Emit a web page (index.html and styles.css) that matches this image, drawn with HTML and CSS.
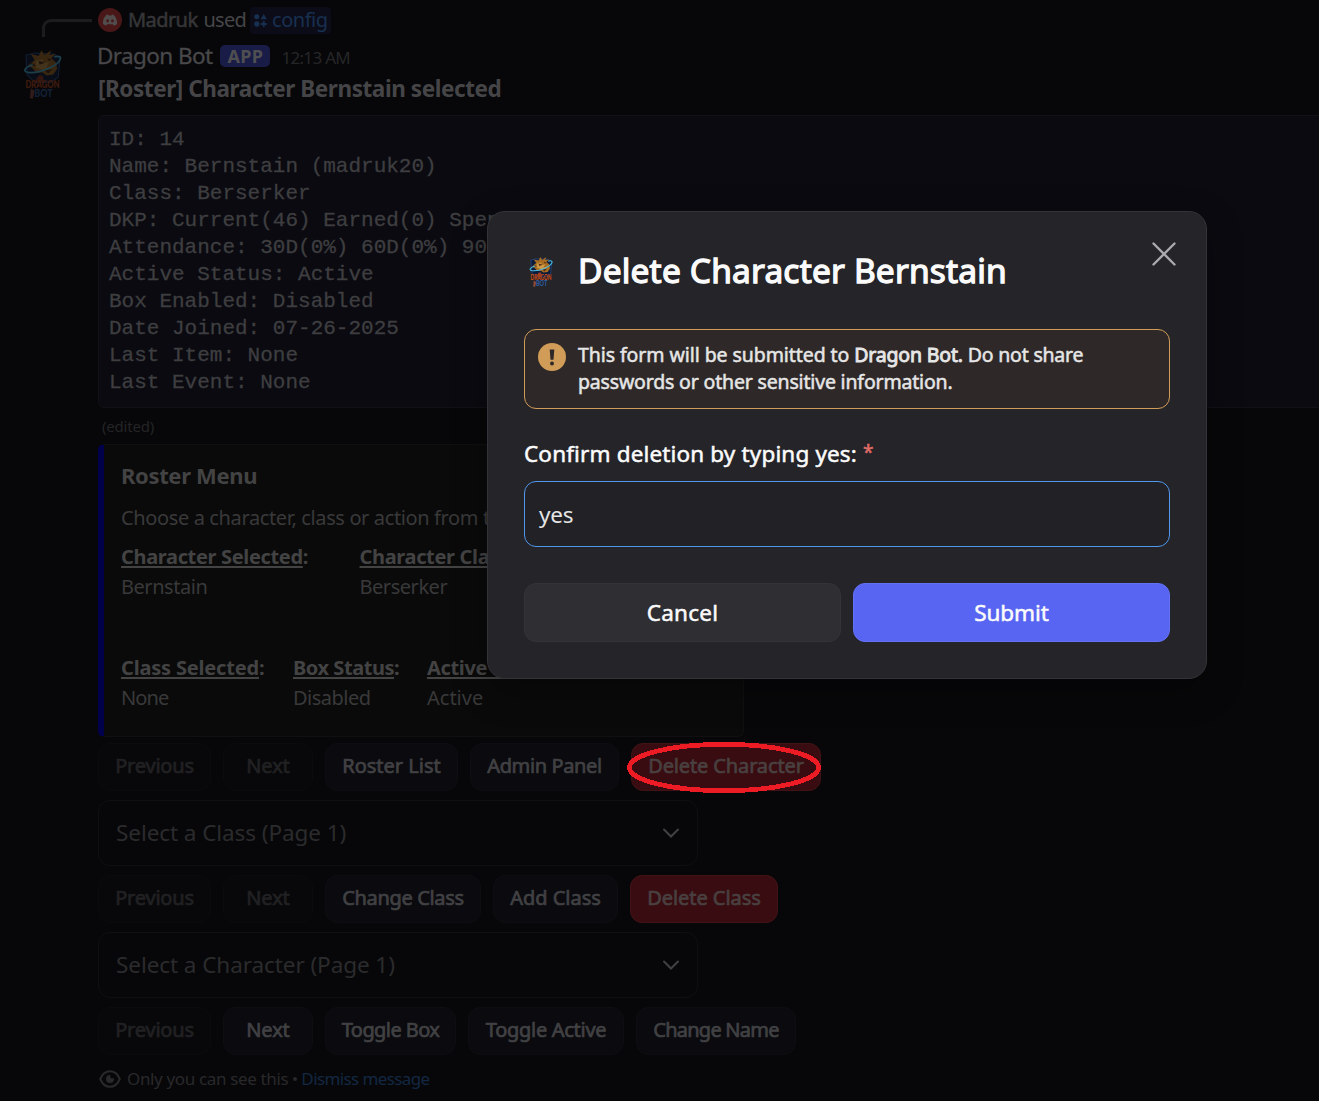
FILE: index.html
```html
<!DOCTYPE html>
<html lang="en">
<head>
<meta charset="utf-8">
<title>Dragon Bot</title>
<link rel="stylesheet" href="styles.css">
</head>
<body>
<svg class="defs" width="0" height="0">
  <symbol id="dragon" viewBox="0 0 40 52">
    <path d="M3 6 L12 4 L32 5 L38 9 L36 29 L28 34 L12 34 L4 26Z" fill="#0e1c3c" stroke="#254c86" stroke-width="1.2"/>
    <path d="M12 11 L8 5 L16 7 L19 1 L22 6 L29 1 L27 6 L34 5 L29 9 L34 14 L35 20 L31 26 L24 27 L20 24 L14 24 L9 19 L5 17Z" fill="#a86d22"/>
    <path d="M13 12 L21 10 L19 15 L27 13 L24 19 L31 17 L27 23 L20 21 L13 19Z" fill="#cf9845"/>
    <path d="M16 12 L22 14 L17 16Z M25 9 L30 11 L26 12Z M8 14 L14 17 L9 17Z M22 22 L30 20 L26 25Z" fill="#4d2c14"/>
    <path d="M10 16 C1 19 -1 23 6 24 C18 25 35 17 38 11 C40 7 36 7 32 8" fill="none" stroke="#49bde0" stroke-width="1.7"/>
    <path d="M16 27 L12 34 L22 34 L20 27Z" fill="#983b20"/>
    <text x="20" y="39.500" text-anchor="middle" class="logo-top" textLength="35" lengthAdjust="spacingAndGlyphs">DRAGON</text>
    <text x="21" y="49" text-anchor="middle" class="logo-bottom" textLength="19" lengthAdjust="spacingAndGlyphs">BOT</text>
    <path d="M8 40 L12 43 L10 51 L7 50Z" fill="#8d4a38"/>
  </symbol>
  <symbol id="chevron" viewBox="0 0 20 12"><path d="M3 2.5 L10 9.5 L17 2.5" fill="none" stroke="currentColor" stroke-width="2" stroke-linecap="round"/></symbol>
</svg>
<main class="chat">
  <aside class="gutter">
    <span class="spine"></span>
    <svg class="avatar"><use href="#dragon"/></svg>
  </aside>
  <article class="message">
    <div class="reply">
      <svg class="user-icon" viewBox="0 0 24 24"><circle cx="12" cy="12" r="12" fill="#491718"/><path d="M8.5 6.8 L10 6.5 L10.6 7.4 H13.4 L14 6.5 L15.8 6.9 C18 9 19.3 12.5 19 16 C17.8 17.1 16.6 17.5 15.6 17.6 L14.8 16.2 H9.2 L8.4 17.6 C7.1 17.4 5.9 16.9 5 16 C4.7 12.5 6 9 8.5 6.8Z" fill="#524d4d"/><ellipse cx="9.6" cy="12.8" rx="1.4" ry="1.6" fill="#491718"/><ellipse cx="14.4" cy="12.8" rx="1.4" ry="1.6" fill="#491718"/></svg>
      <span class="reply-user t-user">Madruk</span>
      <span class="t-used">used</span>
      <span class="command"><svg viewBox="0 0 14 14" width="13" height="13"><circle cx="3" cy="3" r="2.7"/><path d="M10.5 0 L13.9 5.6 H7.1Z"/><circle cx="3" cy="10.8" r="2.9"/><path d="M9.5 7.500h2v2.300h2.300v2h-2.300v2.200H9.500v-2.200H7.200V9.800h2.300z"/></svg><span class="t-config">config</span></span>
    </div>
    <div class="author"><span class="name t-bot">Dragon Bot</span><span class="badge">APP</span><time class="t-time">12:13 AM</time></div>
    <h2 class="headline">[Roster] Character Bernstain selected</h2>
    <pre class="code">ID: 14
Name: Bernstain (madruk20)
Class: Berserker
DKP: Current(46) Earned(0) Spent
Attendance: 30D(0%) 60D(0%) 90D
Active Status: Active
Box Enabled: Disabled
Date Joined: 07-26-2025
Last Item: None
Last Event: None</pre>
    <div class="edited">(edited)</div>
    <section class="embed">
      <h3>Roster Menu</h3>
      <p>Choose a character, class or action from the</p>
      <div class="fields fields-a">
        <div><b class="t-cs"><u>Character Selected</u>:</b><span class="t-bern">Bernstain</span></div>
        <div><b class="t-cs"><u>Character Class</u>:</b><span class="t-bern">Berserker</span></div>
      </div>
      <div class="fields fields-b">
        <div><b class="t-cls"><u>Class Selected</u>:</b><span class="t-none">None</span></div>
        <div><b class="t-box"><u>Box Status</u>:</b><span class="t-dis">Disabled</span></div>
        <div><b class="t-cs"><u>Active Status</u>:</b><span>Active</span></div>
      </div>
    </section>
    <div class="actions">
      <button class="btn w-prev off">Previous</button>
      <button class="btn w-next off">Next</button>
      <button class="btn w-list">Roster List</button>
      <button class="btn w-admin">Admin Panel</button>
      <button class="btn w-delchar danger">Delete Character</button>
      <svg class="ring" width="194" height="51" viewBox="0 0 194 51"><ellipse cx="97" cy="25.500" rx="94.600" ry="23.200"/></svg>
    </div>
    <div class="select">Select a Class (Page 1)<svg><use href="#chevron"/></svg></div>
    <div class="actions">
      <button class="btn w-prev off">Previous</button>
      <button class="btn w-next off">Next</button>
      <button class="btn w-chclass">Change Class</button>
      <button class="btn w-addclass">Add Class</button>
      <button class="btn w-delclass danger">Delete Class</button>
    </div>
    <div class="select">Select a Character (Page 1)<svg><use href="#chevron"/></svg></div>
    <div class="actions">
      <button class="btn w-prev off">Previous</button>
      <button class="btn w-next">Next</button>
      <button class="btn w-tbox">Toggle Box</button>
      <button class="btn w-tactive">Toggle Active</button>
      <button class="btn w-chname">Change Name</button>
    </div>
    <footer class="notice">
      <svg viewBox="0 0 22 18" width="22" height="18"><path d="M1.200 9 C3.500 3.500 7 1.200 11 1.200 S18.500 3.500 20.800 9 C18.500 14.500 15 16.800 11 16.800 S3.500 14.500 1.200 9Z" fill="none" stroke="currentColor" stroke-width="2"/><circle cx="11" cy="9" r="4" fill="currentColor"/><circle cx="13.200" cy="6.600" r="2" fill="#070709"/></svg>
      <span class="t-only">Only you can see this</span><i></i><a class="t-dismiss">Dismiss message</a>
    </footer>
  </article>
</main>
<div class="modal" role="dialog">
  <svg class="close" viewBox="0 0 24 24"><path d="M1.500 1.500 L22.500 22.500 M22.500 1.500 L1.500 22.500"/></svg>
  <header><svg class="bot"><use href="#dragon"/></svg><h1>Delete Character Bernstain</h1></header>
  <div class="warning">
    <svg viewBox="0 0 28 28" width="28" height="28"><circle cx="14" cy="14" r="14" fill="#d09c58"/><path d="M11.700 6.500 h4.600 l-.8 10.300 h-3z" fill="#2e2928"/><circle cx="14" cy="20.500" r="2" fill="#2e2928"/></svg>
    <p><span class="t-form">This form will be submitted to</span> <strong>Dragon Bot.</strong> <span class="t-share">Do not share</span><br>passwords or other sensitive information.</p>
  </div>
  <label>Confirm deletion by typing yes:<em>*</em></label>
  <div class="input">yes</div>
  <div class="choices"><button class="cancel">Cancel</button><button class="submit">Submit</button></div>
</div>
</body>
</html>
```
FILE: styles.css
```css
* { box-sizing: border-box; }
body { margin: 0; width: 1319px; height: 1101px; overflow: hidden; background: #070709; color: #3b3b3d; font: 20px/24px "Noto Sans", sans-serif; }
button { font: inherit; color: inherit; letter-spacing: inherit; margin: 0; padding: 0; white-space: nowrap; }
h1, h2, h3, p, pre { margin: 0; }
svg { flex: none; display: block; }
.defs { position: absolute; }
.logo-top { font: 900 11px "Lato", sans-serif; fill: #d9531c; stroke: #4a1c10; stroke-width: .3px; }
.logo-bottom { font: 900 11px "Lato", sans-serif; fill: #2c5b9e; }

.chat { display: flex; width: 1319px; height: 1101px; overflow: hidden; }
.gutter { width: 98px; flex: none; padding: 19px 0 0 23px; }
.spine { display: block; width: 50px; height: 18px; margin-left: 19px; border: solid #1c1c1e; border-width: 3px 0 0 3px; border-top-left-radius: 9px; }
.avatar { width: 39px; height: 51px; margin-top: 12px; opacity: .3; }
.message { flex: none; width: 1300px; padding-top: 7px; }

.reply { display: flex; align-items: center; height: 26px; color: #464648; }
.user-icon { width: 24px; height: 24px; margin-right: 6px; }
.reply-user { color: #363638; margin-right: 6px; }
.reply-user, .btn, .warning, .choices, label { -webkit-text-stroke: .5px currentColor; }
.btn { -webkit-text-stroke-width: .7px; }
.command { display: flex; align-items: center; gap: 5px; height: 27px; margin-left: 4px; padding: 0 3px 0 4px; border-radius: 4px; background: #0b0c18; color: #18304f; }
.command svg { fill: #18304f; }
.author { display: flex; align-items: center; height: 38px; margin-top: 4px; }
.name { font-size: 22.5px; color: #48484a; margin-left: -1px; -webkit-text-stroke: .3px currentColor; }
.badge { display: flex; align-items: center; justify-content: center; width: 50px; height: 22px; margin: 0 11px 0 8px; border-radius: 5px; background: #191c47; color: #4f4f52; font: 700 18px/22px "Noto Sans", sans-serif; letter-spacing: .3px; }
time { font-size: 17px; color: #262628; padding-top: 3px; }
.headline { font-size: 22.5px; line-height: 30px; letter-spacing: -.43px; color: #454547; margin-top: -1px; }
.code { height: 293px; width: 1300px; margin-top: 11px; padding: 10px; border: 1px solid #111116; border-radius: 6px; background: #0a0a10; color: #3e3e40; font: 21px/27px "Liberation Mono", monospace; -webkit-text-stroke: .3px currentColor; }
.edited { padding-left: 4px; height: 36px; font-size: 15px; line-height: 37px; letter-spacing: -.2px; color: #242426; }

.embed { width: 646px; height: 293px; padding: 17px 16px 0 17px; border: 1px solid #101010; border-left: 6px solid #00004b; border-radius: 6px; background: #0a0a0a; white-space: nowrap; color: #39393a; }
.embed h3 { font-size: 22px; line-height: 26px; letter-spacing: -.35px; color: #434344; }
.embed p { margin-top: 18px; letter-spacing: -.37px; }
.fields { display: grid; }
.fields > div { display: grid; gap: 6px; justify-items: start; }
.fields b { color: #434344; }
.fields u { text-decoration-thickness: 2px; text-underline-offset: 2px; text-decoration-skip-ink: none; }
.fields-a { margin-top: 15px; grid-template-columns: 238.500px 1fr; }
.fields-b { margin-top: 57px; grid-template-columns: 172px 134px 1fr; }

.actions { position: relative; display: flex; gap: 12px; margin-top: 6px; }
.btn { height: 48px; padding-bottom: 2px; border: 1px solid #0e0e12; border-radius: 12px; background: #0a0a0f; color: #414143; }
.btn.off { background: #08080a; border-color: #0b0b0d; color: #212123; }
.btn.danger { background: #380c10; border-color: #421316; color: #494040; }
.w-prev { width: 113px; letter-spacing: -.2px; }
.w-next { width: 90px; letter-spacing: -.1px; }
.w-list { width: 133px; letter-spacing: 0; }
.w-admin { width: 149px; letter-spacing: -.38px; }
.w-delchar { width: 190px; letter-spacing: -.13px; }
.w-chclass { width: 156px; letter-spacing: -.34px; }
.w-addclass { width: 125px; letter-spacing: -.03px; }
.w-delclass { width: 148px; letter-spacing: -.06px; }
.w-tbox { width: 131px; letter-spacing: -.58px; }
.w-tactive { width: 156px; letter-spacing: -.29px; }
.w-chname { width: 160px; letter-spacing: -.76px; }
.ring { position: absolute; left: 529px; top: -1px; fill: none; stroke: #ed1c24; stroke-width: 4.800px; shape-rendering: crispEdges; }
.select { display: flex; align-items: center; justify-content: space-between; width: 600px; height: 66px; margin: 9px 0; padding: 0 16px 0 17px; border: 1px solid #0f0f11; border-radius: 12px; font-size: 22.5px; letter-spacing: -.07px; color: #2b2b2d; }
.select svg { width: 20px; height: 12px; color: #414143; }
.notice { display: flex; align-items: center; height: 24px; margin-top: 12px; padding-left: 1px; font-size: 17px; color: #29292b; }
.notice svg { margin-right: 6px; }
.notice i { width: 4px; height: 4px; border-radius: 2px; background: #29292b; margin: 0 4px 0 5px; }
.notice a { color: #132742; }

.t-user { letter-spacing: -.58px; }
.t-used { letter-spacing: -.75px; }
.t-config { letter-spacing: -.48px; }
.t-bot { letter-spacing: -.6px; }
.t-time { letter-spacing: -.7px; }
.t-cs { letter-spacing: -.34px; }
.t-bern { letter-spacing: -.46px; }
.t-cls { letter-spacing: -.18px; }
.t-none { letter-spacing: -.87px; }
.t-box { letter-spacing: -.45px; }
.t-dis { letter-spacing: -.52px; }
.t-only { letter-spacing: -.35px; }
.t-dismiss { letter-spacing: -.6px; }
.t-form { letter-spacing: -.07px; }
.t-share { letter-spacing: -.2px; }

.modal { position: absolute; left: 487px; top: 211px; width: 720px; height: 468px; padding: 36px; border: 1px solid #333338; border-radius: 18px; background: #242429; color: #fbfbfb; box-shadow: 0 12px 36px rgba(0,0,0,.3); }
.modal header { display: flex; align-items: center; height: 48px; }
.bot { width: 24px; height: 32px; margin: 0 25px 0 5px; }
h1 { font-weight: 400; font-size: 33.500px; line-height: 48px; letter-spacing: .18px; margin-top: -4px; -webkit-text-stroke: 1.300px currentColor; white-space: nowrap; }
.close { position: absolute; right: 30px; top: 30px; width: 24px; height: 24px; fill: none; stroke: #aaaaad; stroke-width: 2.400px; stroke-linecap: round; }
.warning { display: flex; gap: 12px; height: 80px; margin-top: 33px; padding: 11px 13px; border: 1px solid #d09c58; border-radius: 12px; background: #2e2928; color: #e6e6e6; font-size: 19.500px; line-height: 27px; letter-spacing: -.17px; }
.warning svg { margin-top: 2px; }
.warning strong { font-weight: 400; -webkit-text-stroke-width: .9px; }
.warning p { white-space: nowrap; }
label { display: flex; height: 30px; margin-top: 30px; font-size: 22.500px; line-height: 30px; letter-spacing: .15px; }
label em { margin: -2px 0 0 6px; color: #e06b66; font-size: 19px; font-style: normal; }
.input { display: flex; align-items: center; height: 66px; margin-top: 12px; padding: 1px 14px 0; border: 1px solid #5197ed; border-radius: 12px; background: #212126; color: #e6e6e6; font-size: 22.500px; letter-spacing: -.2px; }
.choices { display: grid; grid-template-columns: 1fr 1fr; gap: 12px; margin-top: 36px; }
.choices button { height: 59px; border: 1px solid #333338; border-radius: 12px; background: #2e2e33; color: #fbfbfb; font-size: 22.500px; }
.choices .cancel { letter-spacing: .24px; }
.choices .submit { border-color: #6571f3; background: #5865f2; letter-spacing: -.09px; }
```
